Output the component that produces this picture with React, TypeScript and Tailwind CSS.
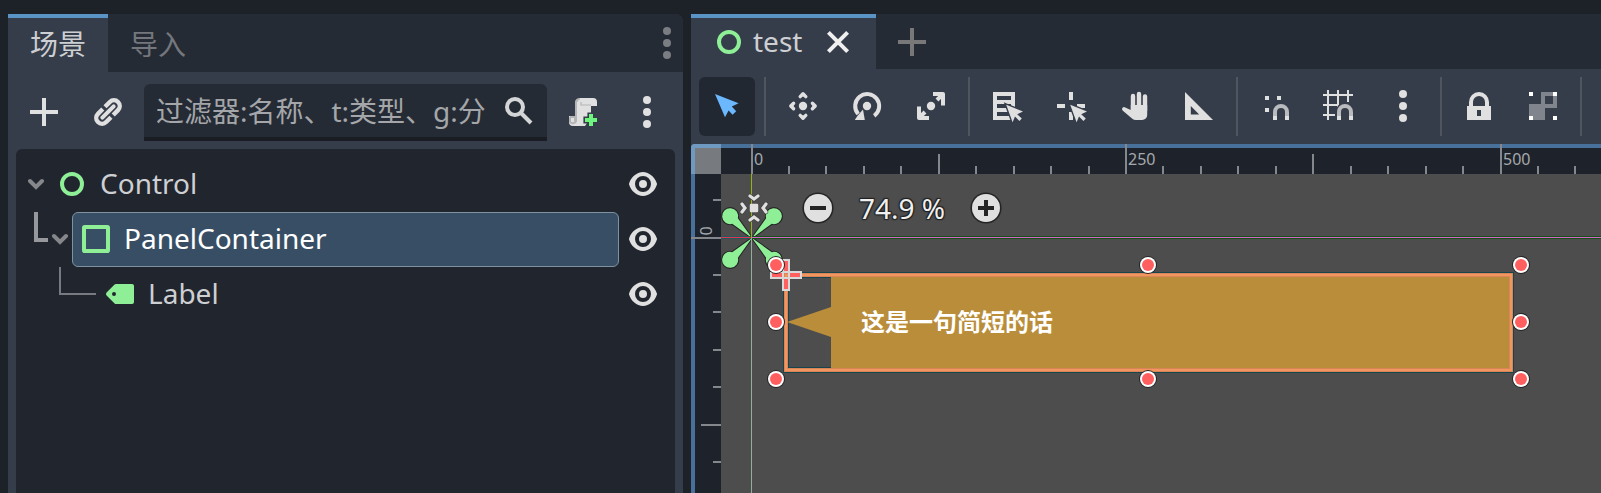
import { useState } from 'react';
import type { ReactNode } from 'react';

interface IconProps {
  children: ReactNode;
  className?: string;
}

// all editor icons are drawn on a 16 unit grid
function Icon({ children, className = 'text-[#e0e0e0]' }: IconProps) {
  return (
    <svg viewBox="0 0 16 16" fill="currentColor" className={`size-8 shrink-0 overflow-visible ${className}`} aria-hidden="true">
      {children}
    </svg>
  );
}

const DOTS = (
  <>
    <circle cx="8" cy="2" r="2" />
    <circle cx="8" cy="8" r="2" />
    <circle cx="8" cy="14" r="2" />
  </>
);

const PLUS = <path d="M7 1v6H1v2h6v6h2V9h6V7H9V1z" />;

const RING = <circle cx="8" cy="8" r="5" fill="none" stroke="currentColor" strokeWidth="2" />;

const CURSOR = (
  <path
    d="M7.6 7.4l8.4 3.4-2.9 1.3 2.3 2.2-1.2 1.2-2.2-2.2-1.2 2.8z"
    stroke="#363d4a"
    strokeWidth="1.4"
    paintOrder="stroke"
  />
);

const MAGNET = (
  <>
    <path d="M8 15v-4a3 3 0 0 1 6 0v4" fill="none" stroke="#363d4a" strokeWidth="3.4" />
    <path d="M8 13v-2a3 3 0 0 1 6 0v2" fill="none" stroke="#b9bbbf" strokeWidth="2" />
    <path d="M7 13h2v2H7zM13 13h2v2h-2z" />
  </>
);

const LINK = (
  <g transform="translate(8 8) rotate(-45)" fill="none" stroke="currentColor">
    <path d="M-.8 2.9h-3.4a2.9 2.9 0 0 1 0-5.8h3.4M.8-2.9h3.4a2.9 2.9 0 0 1 0 5.8H.8" strokeWidth="2.2" />
    <path d="M-4 0h8" strokeWidth="2" strokeLinecap="round" />
  </g>
);

const SCRIPT_ADD = (
  <>
    <path d="M6 1h7a2 2 0 0 1 2 2v2h-3v5.5L9 15H3l2-2V3z" />
    <path d="M5.6 1.5a1.5 1.5 0 0 0-1.3 1.7V10H1v3a2 2 0 0 0 4 0V3" fill="#e0e0e0" />
    <path d="M1.5 10.5H4v2.2" fill="none" stroke="#b4b4b4" />
    <path d="M6.4 1.5A1.7 1.7 0 0 0 4.5 3v9.6a1.7 1.7 0 0 1-3 .3v-2.4" fill="none" stroke="#b4b4b4" />
    <path d="M7 3v1.5h5" fill="none" stroke="#b4b4b4" strokeWidth=".6" />
    <path d="M11 9h2v2h2v2h-2v2h-2v-2H9v-2h2z" fill="#6ef57d" stroke="#363d4a" strokeWidth="1.6" paintOrder="stroke" />
  </>
);

const EYE = (
  <path d="M8 2C5.443 2 2.209 3.948 1.045 7.705a1 1 0 0 0-.01.555C1.95 11.401 4.868 14 8 14s6.048-2.599 6.965-5.74a1 1 0 0 0 0-.555C13.7 3.95 10.56 2 8 2zm0 2a4 4 0 0 1 0 8 4 4 0 0 1 0-8zm0 2a2 2 0 0 0 0 4 2 2 0 0 0 0-4z" />
);

const CHEVRONS_IN =
  'M6 2l2 1.500L10 2M6 14l2-1.500L10 14M2 6l1.500 2L2 10M14 6l-1.500 2L14 10';

const TOOL_GROUPS: { name: string; icon: ReactNode }[][] = [
  [
    {
      name: '选择',
      icon: <path d="M2 2l11.8 4.6-3.4 1.7 2.2 2.3-1.8 1.8-2-2.1L7 13.6z" />,
    },
  ],
  [
    {
      name: '移动',
      icon: (
        <>
          <circle cx="8" cy="8" r="2.1" />
          <path
            d="M6.6 3.3L8 1.9l1.4 1.4M6.6 12.7L8 14.1l1.4-1.4M3.3 6.6L1.9 8l1.4 1.4M12.7 6.6L14.1 8l-1.4 1.4"
            stroke="currentColor"
            strokeWidth="1.700"
            strokeLinejoin="round"
            strokeLinecap="round"
          />
        </>
      ),
    },
    {
      name: '旋转',
      icon: (
        <>
          <circle cx="8" cy="8" r="2.1" />
          <path d="M3.6 12A6 6 0 1 1 11.6 12.9" fill="none" stroke="currentColor" strokeWidth="2" />
          <path d="M6 9.8l.9 5.200H1.900l1.300-2z" />
        </>
      ),
    },
    {
      name: '缩放',
      icon: (
        <>
          <circle cx="8" cy="8" r="2.1" />
          <path
            d="M9 2h5v5.800M14 2l-3 3M7 14H2V8.200M2 14l3-3"
            fill="none"
            stroke="currentColor"
            strokeWidth="2"
            strokeLinejoin="round"
          />
        </>
      ),
    },
  ],
  [
    {
      name: '列表选择',
      icon: (
        <>
          <path fillRule="evenodd" d="M1 1h11v14H1zM3 3v2h7V3zM3 7v2h7V7zM3 11v2h7v-2z" />
          {CURSOR}
        </>
      ),
    },
    {
      name: '轴心',
      icon: (
        <>
          <path d="M7 1h2v4H7zM1 7h4v2H1zM11 7h4v2h-4zM7 11h2v4H7z" />
          {CURSOR}
        </>
      ),
    },
    {
      name: '平移',
      icon: (
        <>
          <path d="M7 3v7M10 2v8M13 3.200v7" stroke="currentColor" strokeWidth="2.200" strokeLinecap="round" />
          <path d="M5.900 7.500H14.100V12.500a2.500 2.500 0 0 1-2.500 2.500H8.500a3 3 0 0 1-2-.8L1.800 10.200a1 1 0 0 1 1.300-1.500L5.900 10z" />
        </>
      ),
    },
    {
      name: '标尺',
      icon: <path fillRule="evenodd" d="M1 1v14h14zM3.900 8v4.200H8.100z" />,
    },
  ],
  [
    {
      name: '智能吸附',
      icon: (
        <>
          <path d="M3 3h2v2H3zM9 3h2v2H9zM3 9h2v2H3z" />
          {MAGNET}
        </>
      ),
    },
    {
      name: '栅格吸附',
      icon: (
        <>
          <path
            d="M2.500 0v15M7.500 0v9M12.500 0v6M0 2.500h15M0 7.500h8M0 12.500h6"
            stroke="currentColor"
          />
          {MAGNET}
        </>
      ),
    },
    { name: '吸附选项', icon: DOTS },
  ],
  [
    {
      name: '锁定',
      icon: (
        <>
          <path d="M4 9V6a4 4 0 0 1 8 0v3" fill="none" stroke="currentColor" strokeWidth="2" />
          <path fillRule="evenodd" d="M2 8h12v7H2zM7 10v3h2v-3z" />
        </>
      ),
    },
    {
      name: '编组',
      icon: (
        <>
          <path fillRule="evenodd" fill="#80848c" d="M7 1h8v8H9v6H1V7h6zM9 3v4h4V3z" />
          <path fill="#fff" d="M1 1h2v2H1zM13 1h2v2h-2zM1 13h2v2H1zM13 13h2v2h-2z" />
        </>
      ),
    },
  ],
];

function ToolButton({ name, children }: { name: string; children: ReactNode }) {
  return (
    <button type="button" aria-label={name} className="flex w-14 shrink-0 items-center justify-center self-stretch pb-px">
      {children}
    </button>
  );
}

function Chevron() {
  return (
    <button type="button" aria-label="折叠" className="w-4 shrink-0 pb-px">
      <svg viewBox="0 0 16 12" className="h-3 w-4" aria-hidden="true">
        <path d="M2 3l6 6 6-6" fill="none" stroke="#85878b" strokeWidth="4" strokeLinecap="round" />
      </svg>
    </button>
  );
}

function VisibilityButton() {
  return (
    <button type="button" aria-label="切换可见性" className="ml-2 shrink-0 pb-px">
      <Icon>{EYE}</Icon>
    </button>
  );
}

function SceneTree() {
  return (
    <ul className="mx-2 mt-2 flex-1 rounded-t-md bg-[#21252e] py-2 pr-4">
      <li className="flex h-[55px] items-center pl-3">
        <Chevron />
        <div className="ml-3 flex flex-1 items-center gap-3 pb-px">
          <Icon className="text-[#8eef97]">{RING}</Icon>
          <span className="pb-0.5 text-[#cdcfd2]">Control</span>
        </div>
        <VisibilityButton />
      </li>
      <li className="flex h-[55px] items-center pl-[18px]">
        <span className="mr-1 h-[30px] w-3.5 self-start border-b-4 border-l-4 border-[#96989d]" />
        <Chevron />
        <div className="ml-1 flex flex-1 items-center gap-3 self-stretch rounded-md border border-[#7f929f] bg-[#384e65] pb-px pl-[7px]">
          <Icon className="text-[#8eef97]">
            <rect x="2" y="2" width="12" height="12" rx=".4" fill="none" stroke="currentColor" strokeWidth="2" />
          </Icon>
          <span className="pb-0.5 text-white">PanelContainer</span>
        </div>
        <VisibilityButton />
      </li>
      <li className="flex h-[55px] items-center pl-[43px]">
        <span className="mr-2 h-7 w-[37px] self-start border-b-2 border-l-2 border-[#777a80]" />
        <div className="flex flex-1 items-center gap-3 pb-px">
          <Icon className="text-[#8eef97]">
            <path d="M6 3a1 1 0 0 0-.707.293l-4 4a1 1 0 0 0 0 1.414l4 4A1 1 0 0 0 6 13h8a1 1 0 0 0 1-1V4a1 1 0 0 0-1-1zM5 7a1 1 0 0 1 0 2 1 1 0 0 1 0-2z" />
          </Icon>
          <span className="pb-0.5 text-[#cdcfd2]">Label</span>
        </div>
        <VisibilityButton />
      </li>
    </ul>
  );
}

function SceneDock() {
  const [filter, setFilter] = useState('');

  return (
    <section className="flex w-[675px] shrink-0 flex-col rounded-tr-lg bg-[#363d4a]">
      <div className="flex h-[58px] items-stretch rounded-tr-lg bg-[#252b34]">
        <button type="button" className="border-t-4 border-[#5a94c6] bg-[#363d4a] px-[22px] pb-0.5 text-[#cdcfd2]">
          场景
        </button>
        <button type="button" className="border-t-4 border-transparent px-[22px] pb-0.5 text-[#74777d]">
          导入
        </button>
        <button type="button" aria-label="面板选项" className="ml-auto">
          <Icon className="text-[#7a7d82]">{DOTS}</Icon>
        </button>
      </div>
      <div className="flex gap-2 px-2 pt-3">
        <ToolButton name="添加节点">
          <Icon>{PLUS}</Icon>
        </ToolButton>
        <ToolButton name="实例化子场景">
          <Icon>{LINK}</Icon>
        </ToolButton>
        <label className="flex h-[57px] min-w-0 flex-1 items-center rounded-t-md border-b-4 border-[#1a1e24] bg-[#252b34] px-3 pt-px">
          <input
            type="text"
            aria-label="过滤器"
            value={filter}
            onChange={(e) => setFilter(e.target.value)}
            placeholder="过滤器:名称、t:类型、g:分"
            className="min-w-0 flex-1 bg-transparent text-[#cdcfd2] outline-none placeholder:text-[#a4a6a9]"
          />
          <Icon className="text-[#d4d5d6]">
            <circle cx="6" cy="6" r="4" fill="none" stroke="currentColor" strokeWidth="2" />
            <path d="M9 9l5 5" stroke="currentColor" strokeWidth="2" />
          </Icon>
        </label>
        <ToolButton name="附加脚本">
          <Icon>{SCRIPT_ADD}</Icon>
        </ToolButton>
        <ToolButton name="更多选项">
          <Icon>{DOTS}</Icon>
        </ToolButton>
      </div>
      <SceneTree />
    </section>
  );
}

function Toolbar() {
  const [tool, setTool] = useState('选择');

  return (
    <div className="flex h-[75px] shrink-0 gap-2 overflow-hidden px-2 py-2">
      {TOOL_GROUPS.map((group, i) => (
        <div key={i} className="flex h-[59px] gap-2">
          {group.map(({ name, icon }) => (
            <button
              key={name}
              type="button"
              aria-label={name}
              onClick={() => setTool(name)}
              className={`flex w-14 shrink-0 items-center justify-center rounded-md pb-px ${tool === name ? 'bg-[#212831]' : ''}`}
            >
              <Icon className={tool === name ? 'text-[#6cb8ff]' : 'text-[#e0e0e0]'}>{icon}</Icon>
            </button>
          ))}
          <span className="mx-px w-0.5 shrink-0 bg-[#50565f]" />
        </div>
      ))}
    </div>
  );
}

// canvas pixels per ruler mark (25 units at 74.9 %)
const MARK = 37.45;
const ORIGIN = { x: 61, y: 94 };

function Rulers() {
  const marks = Array.from({ length: 60 }, (_, i) => i - 1);
  const len = (i: number) => (i % 10 === 0 ? 30 : i % 5 === 0 ? 20 : 8);

  return (
    <g fill="#84878c">
      {marks
        .filter((i) => i >= 0)
        .map((i) => (
          <rect key={`x${i}`} x={Math.floor(ORIGIN.x + i * MARK) - 1} y={30 - len(i)} width="2" height={len(i)} />
        ))}
      {marks.map((i) => (
        <rect key={`y${i}`} x={30 - len(i)} y={Math.floor(ORIGIN.y + i * MARK) - 1} width={len(i)} height="2" />
      ))}
    </g>
  );
}

// drawn around the scene origin
function Gizmos() {
  const handles = [24, 396, 769].flatMap((x) => [27, 84, 141].map((y) => ({ x, y })));

  return (
    <g transform={`translate(${ORIGIN.x} ${ORIGIN.y})`}>
      <g fill="#8eef97" stroke="#252525" strokeWidth="2" paintOrder="stroke">
        {[45, 135, 225, 315].map((a) => (
          <path key={a} transform={`rotate(${a})`} d="M0 0L24-4A8 8 0 1 1 24 4z" />
        ))}
      </g>
      <rect x="34" y="37" width="725" height="95" fill="none" stroke="#16454d" strokeWidth="6" />
      <path d="M79 37h680v95H79V99L35 84l44-15z" fill="#b98d39" />
      <rect x="-1" y="-64" width="1" height="64" fill="#93b514" />
      <rect x="-1" y="0" width="1" height="2000" fill="#8fae9b" />
      <rect x="-31" y="-2" width="30" height="3" fill="#26585a" />
      <rect x="-31" y="-1" width="30" height="1" fill="#e0355a" />
      <rect x="0" y="-2" width="4000" height="3" fill="#155016" />
      <rect x="0" y="-1" width="4000" height="1" fill="#d465cc" />
      <rect x="34" y="37" width="725" height="95" fill="none" stroke="#d98459" strokeWidth="4" />
      <rect x="34" y="37" width="725" height="95" fill="none" stroke="#f2965f" strokeWidth="2" />
      <g fill="#ff5f5f" stroke="#d8d8d8" strokeWidth="2">
        <path d="M31 22h6v12h-6zM31 40h6v12h-6zM19 34h12v6H19zM37 34h12v6H37z" />
      </g>
      {handles
        .filter(({ x, y }) => !(x === 396 && y === 84))
        .map(({ x, y }) => (
          <g key={`${x}-${y}`}>
            <circle cx={x} cy={y} r="9" fill="#252525" />
            <circle cx={x} cy={y} r="8" fill="#fff" />
            <circle cx={x} cy={y} r="6" fill="#ff5f5f" />
          </g>
        ))}
    </g>
  );
}

function ZoomControls() {
  return (
    <div className="absolute top-12 left-[47px] flex items-center text-[#f0f0f0]">
      <button type="button" aria-label="居中视图" className="mr-8">
        <Icon>
          <rect x="5.900" y="5.900" width="4.200" height="4.200" rx=".6" />
          <g fill="none" strokeLinecap="round">
            <path d={CHEVRONS_IN} stroke="#3c3c3c" strokeWidth="2.200" />
            <path d={CHEVRONS_IN} stroke="#e0e0e0" strokeWidth="1.600" />
          </g>
        </Icon>
      </button>
      <button type="button" aria-label="缩小">
        <Icon>
          <circle cx="8" cy="8" r="7.800" fill="#252525" />
          <circle cx="8" cy="8" r="7" />
          <path d="M4 7h8v2H4z" fill="#252525" />
        </Icon>
      </button>
      <button
        type="button"
        className="w-[136px] text-center leading-8 [text-shadow:1px_1px_1px_#222,-1px_-1px_1px_#222,1px_-1px_1px_#222,-1px_1px_1px_#222]"
      >
        74.9 %
      </button>
      <button type="button" aria-label="放大">
        <Icon>
          <circle cx="8" cy="8" r="7.800" fill="#252525" />
          <circle cx="8" cy="8" r="7" />
          <path d="M7 4h2v3h3v2H9v3H7V9H4V7h3z" fill="#252525" />
        </Icon>
      </button>
    </div>
  );
}

function Viewport() {
  return (
    <div className="relative flex-1 overflow-hidden rounded-tl-sm bg-[#4d4d4d]">
      <svg className="absolute inset-0 size-full" aria-hidden="true">
        <Gizmos />
        <path d="M0 0H4000V30H30V4000H0z" fill="#1e232b" />
        <path d="M0 0H4000V4H4V4000H0z" fill="#47719a" />
        <path d="M0 0H30V30H0z" fill="#777b80" />
        <path d="M0 0H30V4H4V30H0z" fill="#7099c2" />
        <Rulers />
      </svg>
      <div className="text-base leading-4 text-[#a5a8ad]">
        <span className="absolute top-[7px] left-[63px]">0</span>
        <span className="absolute top-[7px] left-[437px]">250</span>
        <span className="absolute top-[7px] left-[812px]">500</span>
        <span className="absolute top-[79px] left-[10px] -rotate-90">0</span>
      </div>
      <p className="absolute top-[166px] left-[170px] text-2xl leading-6 font-bold text-white">这是一句简短的话</p>
      <ZoomControls />
    </div>
  );
}

function MainScreen() {
  return (
    <section className="flex min-w-0 flex-1 flex-col bg-[#363d4a]">
      <div className="flex h-[55px] shrink-0 items-stretch bg-[#252b34]">
        <div className="flex items-center border-t-4 border-[#5a94c6] bg-[#363d4a] px-[22px] pb-1">
          <Icon className="text-[#8eef97]">{RING}</Icon>
          <span className="ml-2 pb-0.5 text-[#cdcfd2]">test</span>
          <button type="button" aria-label="关闭场景" className="ml-5">
            <Icon className="text-[#f0f0f0]">
              <path d="M3.200 3.200l9.600 9.600M12.800 3.200l-9.600 9.600" stroke="currentColor" strokeWidth="2" />
            </Icon>
          </button>
        </div>
        <button type="button" aria-label="添加新场景" className="ml-5">
          <Icon className="text-[#787878]">{PLUS}</Icon>
        </button>
      </div>
      <Toolbar />
      <Viewport />
    </section>
  );
}

export default function App() {
  return (
    <main
      lang="zh-CN"
      className="flex h-screen gap-2 overflow-hidden bg-[#1d2229] pt-3.5 pl-2 font-['Noto_Sans','Noto_Sans_CJK_SC',sans-serif] text-[28px] leading-9"
    >
      <SceneDock />
      <MainScreen />
    </main>
  );
}
